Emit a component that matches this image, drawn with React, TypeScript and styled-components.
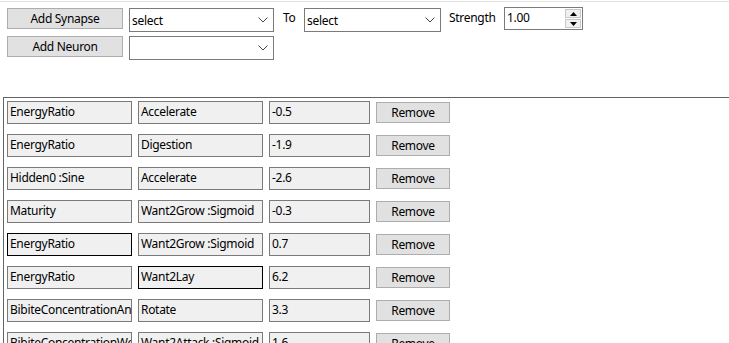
import React from "react";
import styled, { createGlobalStyle, css } from "styled-components";

const Global = createGlobalStyle`
  html, body { margin: 0; padding: 0; background: #ffffff; overflow: hidden; }
  body {
    font-family: "Segoe UI", "Noto Sans", "Liberation Sans", sans-serif;
    font-size: 12px;
    letter-spacing: -0.3px;
    color: #000;
  }
`;

const Page = styled.div`
  width: 729px;
  height: 342px;
  border-top: 1px solid #e3e3e3;
  margin-top: 1px;
  box-sizing: border-box;
  overflow: hidden;
`;

const Controls = styled.div`
  display: flex;
  flex-direction: column;
  gap: 4px;
  padding: 6px 0 0 7px;
`;

const ControlRow = styled.div`
  display: flex;
  align-items: flex-start;
  height: 24px;
`;

const Btn = styled.button<{ $w: number }>`
  width: ${(p) => p.$w}px;
  height: 21px;
  padding: 0;
  background: #e1e1e1;
  border: 1px solid #adadad;
  font: inherit;
  letter-spacing: inherit;
  color: #000;
  box-sizing: border-box;
  flex: none;
`;

const SelectBox = styled.div<{ $w: number; $ml: number }>`
  width: ${(p) => p.$w}px;
  margin-left: ${(p) => p.$ml}px;
  height: 24px;
  background: #fff;
  border: 1px solid #7a7a7a;
  box-sizing: border-box;
  display: flex;
  align-items: center;
  justify-content: space-between;
  padding: 0 5px 0 2px;
  flex: none;
`;

const Label = styled.span<{ $w: number; $ml: number }>`
  width: ${(p) => p.$w}px;
  margin-left: ${(p) => p.$ml}px;
  line-height: 20px;
  flex: none;
`;

const Num = styled.div`
  width: 79px;
  height: 23px;
  margin-top: -1px;
  background: #fff;
  border: 1px solid #7a7a7a;
  box-sizing: border-box;
  display: flex;
  justify-content: space-between;
  padding: 0 1px 0 2px;
  flex: none;
`;

const NumText = styled.span`
  line-height: 19px;
`;

const Spin = styled.div`
  display: flex;
  flex-direction: column;
  width: 16px;
  margin-top: 1px;
  gap: 1px;
`;

const SpinBtn = styled.div`
  height: 9px;
  background: #f0f0f0;
  border: 1px solid #c8c8c8;
  box-sizing: border-box;
  display: flex;
  align-items: center;
  justify-content: center;
`;

const Panel = styled.div`
  margin: 37px 0 0 3px;
  border-left: 1px solid #646464;
  border-top: 1px solid #646464;
  padding: 3px 0 0 3px;
  display: flex;
  flex-direction: column;
  gap: 10px;
`;

const Row = styled.div`
  display: flex;
  align-items: flex-start;
  height: 23px;
  flex: none;
`;

const Field = styled.div<{ $w: number; $ml: number; $focus?: boolean }>`
  width: ${(p) => p.$w}px;
  margin-left: ${(p) => p.$ml}px;
  height: 23px;
  box-sizing: border-box;
  background: #f0f0f0;
  border: 1px solid #7a7a7a;
  ${(p) =>
    p.$focus &&
    css`
      border-color: #000;
    `}
  padding: 0 2px;
  line-height: 20px;
  white-space: nowrap;
  overflow: hidden;
  flex: none;
`;

const RemoveBtn = styled(Btn)`
  margin-left: 6px;
  margin-top: 1px;
`;

const Chevron = () => (
  <svg width="10" height="6" viewBox="0 0 10 6">
    <path d="M0.5 0.5 L5 5 L9.5 0.5" fill="none" stroke="#444" strokeWidth="1" />
  </svg>
);

const Tri = ({ up }: { up?: boolean }) => (
  <svg width="7" height="4" viewBox="0 0 7 4">
    <path d={up ? "M0 4 L3.5 0 L7 4 Z" : "M0 0 L3.5 4 L7 0 Z"} fill="#000" />
  </svg>
);

type R = { a: string; b: string; v: string; fa?: boolean; fb?: boolean };
const rows: R[] = [
  { a: "EnergyRatio", b: "Accelerate", v: "-0.5" },
  { a: "EnergyRatio", b: "Digestion", v: "-1.9" },
  { a: "Hidden0 :Sine", b: "Accelerate", v: "-2.6" },
  { a: "Maturity", b: "Want2Grow :Sigmoid", v: "-0.3" },
  { a: "EnergyRatio", b: "Want2Grow :Sigmoid", v: "0.7", fa: true },
  { a: "EnergyRatio", b: "Want2Lay", v: "6.2", fb: true },
  { a: "BibiteConcentrationAngle", b: "Rotate", v: "3.3" },
  { a: "BibiteConcentrationWeight", b: "Want2Attack :Sigmoid", v: "1.6" },
];

export default function App() {
  return (
    <Page>
      <Global />
      <Controls>
        <ControlRow>
          <Btn $w={116}>Add Synapse</Btn>
          <SelectBox $w={145} $ml={6}>
            <span>select</span>
            <Chevron />
          </SelectBox>
          <Label $w={21} $ml={9}>To</Label>
          <SelectBox $w={137} $ml={0}>
            <span>select</span>
            <Chevron />
          </SelectBox>
          <Label $w={55} $ml={8}>Strength</Label>
          <Num>
            <NumText>1.00</NumText>
            <Spin>
              <SpinBtn>
                <Tri up />
              </SpinBtn>
              <SpinBtn>
                <Tri />
              </SpinBtn>
            </Spin>
          </Num>
        </ControlRow>
        <ControlRow>
          <Btn $w={116}>Add Neuron</Btn>
          <SelectBox $w={145} $ml={6}>
            <span></span>
            <Chevron />
          </SelectBox>
        </ControlRow>
      </Controls>
      <Panel>
        {rows.map((r, i) => (
          <Row key={i}>
            <Field $w={125} $ml={0} $focus={r.fa}>{r.a}</Field>
            <Field $w={125} $ml={6} $focus={r.fb}>{r.b}</Field>
            <Field $w={101} $ml={6}>{r.v}</Field>
            <RemoveBtn $w={74}>Remove</RemoveBtn>
          </Row>
        ))}
      </Panel>
    </Page>
  );
}
